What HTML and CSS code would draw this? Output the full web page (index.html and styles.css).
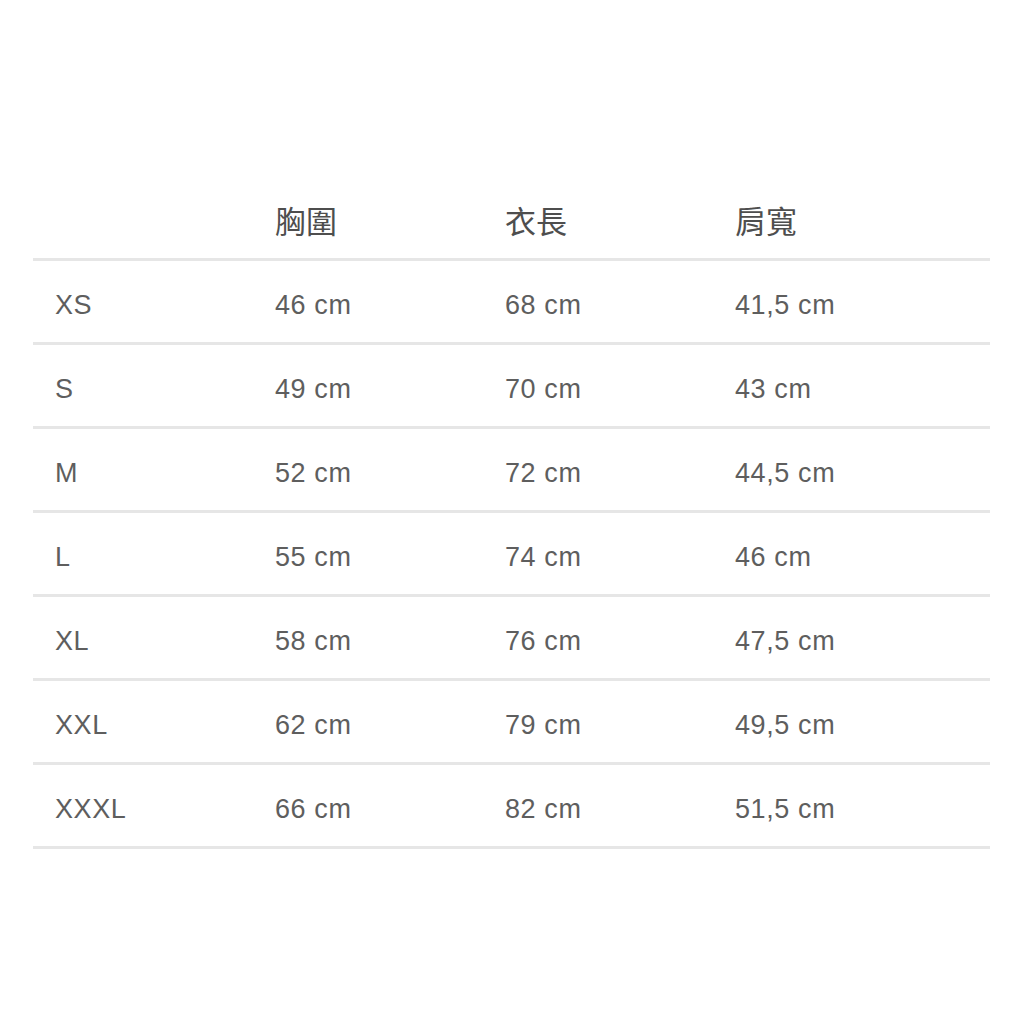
FILE: index.html
```html
<!DOCTYPE html>
<html lang="zh-Hant">
<head>
<meta charset="utf-8">
<title>尺寸表</title>
<link rel="stylesheet" href="styles.css">
</head>
<body>
<div class="table">
  <div class="row head">
    <div class="cell"></div>
    <div class="cell">胸圍</div>
    <div class="cell">衣長</div>
    <div class="cell">肩寬</div>
  </div>
  <div class="row"><div class="cell">XS</div><div class="cell">46 cm</div><div class="cell">68 cm</div><div class="cell">41,5 cm</div></div>
  <div class="row"><div class="cell">S</div><div class="cell">49 cm</div><div class="cell">70 cm</div><div class="cell">43 cm</div></div>
  <div class="row"><div class="cell">M</div><div class="cell">52 cm</div><div class="cell">72 cm</div><div class="cell">44,5 cm</div></div>
  <div class="row"><div class="cell">L</div><div class="cell">55 cm</div><div class="cell">74 cm</div><div class="cell">46 cm</div></div>
  <div class="row"><div class="cell">XL</div><div class="cell">58 cm</div><div class="cell">76 cm</div><div class="cell">47,5 cm</div></div>
  <div class="row"><div class="cell">XXL</div><div class="cell">62 cm</div><div class="cell">79 cm</div><div class="cell">49,5 cm</div></div>
  <div class="row"><div class="cell">XXXL</div><div class="cell">66 cm</div><div class="cell">82 cm</div><div class="cell">51,5 cm</div></div>
</div>
</body>
</html>
```
FILE: styles.css
```css
html, body {
  margin: 0;
  padding: 0;
  background: #ffffff;
}
body {
  width: 1024px;
  height: 1024px;
  font-family: "Liberation Sans", Arial, "Noto Sans CJK TC", sans-serif;
}
.table {
  margin: 180px 34px 0 33px;
  display: flex;
  flex-direction: column;
}
.row {
  display: grid;
  grid-template-columns: 220px 230px 230px 1fr;
  height: 81px;
  align-items: center;
  border-bottom: 3px solid #e6e6e6;
  color: #5e5e5e;
  font-size: 27px;
  letter-spacing: 0.6px;
}
.row.head {
  height: 78px;
  color: #4e4e4e;
  font-size: 31px;
  letter-spacing: 0;
  font-family: "Noto Sans CJK TC", sans-serif;
}
.cell {
  padding-left: 22px;
  padding-top: 7px;
  line-height: 1;
}
.row.head .cell {
  padding-top: 0;
}
```
